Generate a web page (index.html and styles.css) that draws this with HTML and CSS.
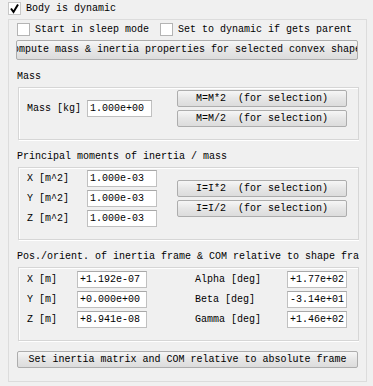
FILE: index.html
```html
<!DOCTYPE html>
<html lang="en">
<head>
    <meta charset="UTF-8">
    <title>Dynamic properties</title>
    <link rel="stylesheet" href="styles.css">
</head>
<body>
<div class="check-row top-row">
    <span class="box checked">
        <svg width="11" height="11" viewBox="0 0 11 11"><path d="M2 5.5 L4.5 9 L9 1.5" fill="none" stroke="#000" stroke-width="2"/></svg>
    </span>
    <span class="label">Body is dynamic</span>
</div>

<div class="frame">
    <div class="clip">
        <div class="check-row options">
            <span class="box"></span>
            <span class="label">Start in sleep mode</span>
            <span class="box second"></span>
            <span class="label">Set to dynamic if gets parent</span>
        </div>

        <div class="btn compute"><span>Compute mass &amp; inertia properties for selected convex shapes</span></div>

        <!-- Mass -->
        <div class="group-title">Mass</div>
        <div class="group mass">
            <div class="field">
                <span class="lbl">Mass [kg]</span>
                <span class="input w65">1.000e+00</span>
            </div>
            <div class="btn-stack">
                <div class="btn small"><span>M=M*2  (for selection)</span></div>
                <div class="btn small"><span>M=M/2  (for selection)</span></div>
            </div>
        </div>

        <!-- Inertia -->
        <div class="group-title">Principal moments of inertia / mass</div>
        <div class="group inertia">
            <div class="rows">
                <div class="field"><span class="lbl">X [m^2]</span><span class="input w70">1.000e-03</span></div>
                <div class="field"><span class="lbl">Y [m^2]</span><span class="input w70">1.000e-03</span></div>
                <div class="field"><span class="lbl">Z [m^2]</span><span class="input w70">1.000e-03</span></div>
            </div>
            <div class="btn-stack">
                <div class="btn small"><span>I=I*2  (for selection)</span></div>
                <div class="btn small"><span>I=I/2  (for selection)</span></div>
            </div>
        </div>

        <!-- Frame -->
        <div class="group-title">Pos./orient. of inertia frame &amp; COM relative to shape frame</div>
        <div class="group pose">
            <span class="lbl">X [m]</span><span class="input w70">+1.192e-07</span>
            <span class="lbl far">Alpha [deg]</span><span class="input w60">+1.77e+02</span>
            <span class="lbl">Y [m]</span><span class="input w70">+0.000e+00</span>
            <span class="lbl far">Beta [deg]</span><span class="input w60">-3.14e+01</span>
            <span class="lbl">Z [m]</span><span class="input w70">+8.941e-08</span>
            <span class="lbl far">Gamma [deg]</span><span class="input w60">+1.46e+02</span>
        </div>

        <div class="btn bottom"><span>Set inertia matrix and COM relative to absolute frame</span></div>
    </div>
</div>
</body>
</html>
```

FILE: styles.css
```css
body {
    margin: 0;
    background-color: #f0f0f0;
    font-family: "Liberation Mono", "DejaVu Sans Mono", monospace;
    font-size: 10px;
    color: #000;
}

.label, .lbl, .group-title, .btn span, .input {
    white-space: pre;
}

.check-row {
    display: flex;
    align-items: center;
    height: 13px;
}

.top-row {
    margin-top: 2px;
    padding-left: 8px;
}

.box {
    width: 11px;
    height: 11px;
    border: 1px solid #b4b4b4;
    background-color: #fff;
    display: flex;
    align-items: center;
    justify-content: center;
}

.box.checked {
    border-color: #c8c8c8;
}

.label {
    margin-left: 5px;
    line-height: 13px;
}

.options {
    margin-top: 3px;
    padding-left: 8px;
}

.box.second {
    margin-left: 11px;
}

.frame {
    margin: 4px 0 0 8px;
    width: 359px;
    height: 363px;
    box-sizing: border-box;
    border: 1px solid #dcdcdc;
}

.clip {
    width: 350px;
    height: 100%;
    overflow: hidden;
}

.btn {
    box-sizing: border-box;
    border: 1px solid #adadad;
    border-radius: 2px;
    background: linear-gradient(#f6f6f6, #e6e6e6 50%, #dcdcdc);
    display: flex;
    align-items: center;
    justify-content: center;
    overflow: hidden;
    line-height: 12px;
}

.compute {
    margin: 4px 0 0 7px;
    width: 342px;
    height: 20px;
}

.group-title {
    margin: 11px 0 0 8px;
    height: 12px;
    line-height: 12px;
}

.group {
    margin: 4px 0 0 9px;
    width: 341px;
    box-sizing: border-box;
    border: 1px solid #d6d6d6;
    box-shadow: inset 1px 1px 0 #fff, 1px 1px 0 #fff;
    padding: 2px 0 12px 8px;
}

.mass, .inertia {
    display: flex;
    align-items: center;
}

.rows {
    display: flex;
    flex-direction: column;
    gap: 3px;
}

.field {
    display: flex;
    align-items: center;
}

.field .lbl {
    width: 60px;
}

.lbl {
    line-height: 17px;
}

.input {
    box-sizing: border-box;
    height: 17px;
    background-color: #fff;
    border: 1px solid #c0c0c0;
    border-top-color: #a8a8a8;
    padding-left: 2px;
    line-height: 15px;
}

.w65 { width: 65px; }
.w70 { width: 70px; }
.w60 { width: 60px; }

.btn-stack {
    display: flex;
    flex-direction: column;
    gap: 3px;
}

.mass .btn-stack {
    margin-left: 25px;
}

.inertia .btn-stack {
    margin-left: 20px;
}

.small {
    width: 170px;
    height: 17px;
}

.pose {
    display: grid;
    grid-template-columns: 50px 70px 140px 60px;
    row-gap: 3px;
    padding-top: 3px;
}

.pose .far {
    margin-left: 48px;
}

.bottom {
    margin: 10px 0 0 8px;
    width: 341px;
    height: 17px;
}
```
